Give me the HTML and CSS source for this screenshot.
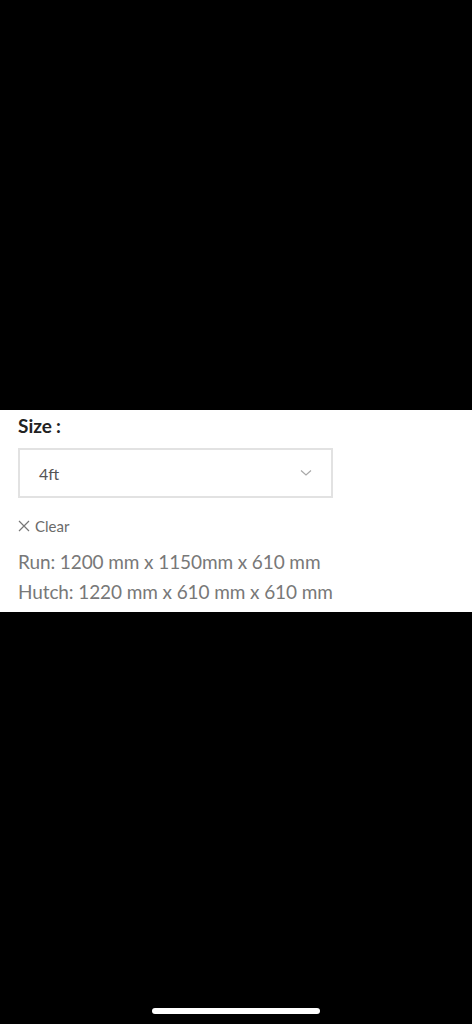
FILE: index.html
```html
<!DOCTYPE html>
<html>
<head>
<meta charset="utf-8">
<link rel="stylesheet" href="styles.css">
</head>
<body>
<div class="screen">
  <div class="top-black"></div>
  <section class="panel">
    <div class="label">Size<span class="colon">:</span></div>
    <div class="select">
      <span class="select-value">4ft</span>
      <svg class="chevron" width="12" height="8" viewBox="0 0 12 8"><path d="M1 1.5 L6 6 L11 1.5" fill="none" stroke="#a8a8a8" stroke-width="1.2"/></svg>
    </div>
    <div class="clear">
      <svg class="x-icon" width="12" height="12" viewBox="0 0 12 12"><path d="M1 1 L11 11 M11 1 L1 11" stroke="#777" stroke-width="1.2"/></svg>
      <span>Clear</span>
    </div>
    <div class="desc">
      <p>Run: 1200 mm x 1150mm x 610 mm</p>
      <p>Hutch: 1220 mm x 610 mm x 610 mm</p>
    </div>
  </section>
  <div class="bottom-black"></div>
  <div class="home-indicator"></div>
</div>
</body>
</html>
```
FILE: styles.css
```css
html, body {
  margin: 0;
  padding: 0;
  background: #000;
}
.screen {
  position: relative;
  width: 472px;
  height: 1024px;
  display: flex;
  flex-direction: column;
  font-family: Lato, "Noto Sans", sans-serif;
}
.top-black {
  height: 410px;
  background: #000;
}
.panel {
  height: 202px;
  box-sizing: border-box;
  background: #fff;
  padding: 5px 18px 0 18px;
}
.label {
  font-weight: 700;
  font-size: 19px;
  line-height: 22px;
  color: #222;
}
.colon {
  margin-left: 4px;
}
.select {
  margin-top: 11px;
  width: 315px;
  height: 50px;
  box-sizing: border-box;
  border: 2px solid #e2e2e2;
  display: flex;
  align-items: center;
  justify-content: space-between;
  padding: 0 19px 0 19px;
}
.select-value {
  font-size: 16px;
  color: #555;
}
.chevron {
  display: block;
}
.clear {
  margin-top: 19px;
  display: flex;
  align-items: center;
  gap: 5px;
  font-size: 15px;
  color: #6a6a6a;
  line-height: 18px;
}
.x-icon {
  display: block;
}
.desc {
  margin-top: 12px;
  font-size: 19px;
  color: #787878;
  line-height: 30px;
  letter-spacing: -0.1px;
}
.desc p {
  margin: 0;
}
.bottom-black {
  flex: 1;
  background: #000;
}
.home-indicator {
  position: absolute;
  left: 152px;
  top: 1008px;
  width: 168px;
  height: 6px;
  border-radius: 3px;
  background: #fff;
}
```
